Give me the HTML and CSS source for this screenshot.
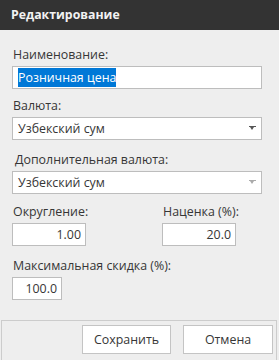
FILE: index.html
```html
<!DOCTYPE html>
<html lang="ru">
<head>
<meta charset="utf-8">
<link rel="stylesheet" href="styles.css">
</head>
<body>
<div class="dialog">
  <div class="titlebar">Редактирование</div>
  <div class="form">
    <div class="field f1">
      <div class="label">Наименование:</div>
      <div class="input wide"><span class="sel">Розничная цена</span></div>
    </div>
    <div class="field f2">
      <div class="label">Валюта:</div>
      <div class="input wide select"><span>Узбекский сум</span><span class="arrow dark"></span></div>
    </div>
    <div class="field f3">
      <div class="label indent">Дополнительная валюта:</div>
      <div class="input wide select"><span>Узбекский сум</span><span class="arrow light"></span></div>
    </div>
    <div class="row f4">
      <div class="field">
        <div class="label">Округление:</div>
        <div class="input num small">1.00</div>
      </div>
      <div class="field">
        <div class="label">Наценка (%):</div>
        <div class="input num small">20.0</div>
      </div>
    </div>
    <div class="field f5">
      <div class="label">Максимальная скидка (%):</div>
      <div class="input num tiny">100.0</div>
    </div>
  </div>
  <div class="footer">
    <button class="btn save">Сохранить</button>
    <button class="btn cancel">Отмена</button>
  </div>
</div>
</body>
</html>
```
FILE: styles.css
```css
* { box-sizing: border-box; }
html, body { margin: 0; padding: 0; }
body {
  background: #eeeeee;
  font-family: "Open Sans", "Noto Sans", sans-serif;
  font-size: 12.4px;
  color: #363636;
  width: 279px;
  height: 360px;
  overflow: hidden;
}
.dialog { display: flex; flex-direction: column; height: 360px; }
.titlebar {
  height: 30px;
  background: #333333;
  color: #f2f2f2;
  font-weight: bold;
  font-size: 12.3px;
  line-height: 30px;
  padding-left: 11px;
}
.form { flex: 1; padding: 0 17px 0 12px; display: flex; flex-direction: column; }
.field { display: flex; flex-direction: column; }
.label { line-height: 16px; height: 16px; margin-bottom: 3px; padding-left: 1px; white-space: nowrap; }
.label.indent { padding-left: 3px; }
.f1 { margin-top: 17px; }
.f2 { margin-top: 9px; }
.f3 { margin-top: 12px; }
.f4 { margin-top: 10px; }
.f5 { margin-top: 12px; }
.input {
  height: 23px;
  background: #ffffff;
  border: 1px solid #bdbdbd;
  line-height: 21px;
  padding: 0 4px 0 5px;
  white-space: nowrap;
}
.wide { width: 250px; }
.small { width: 74px; }
.tiny { width: 50px; }
.num { text-align: right; }
.sel { background: #0078d7; color: #ffffff; padding: 1px 0; }
.select { display: flex; align-items: center; justify-content: space-between; padding-right: 5px; }
.arrow { width: 7px; height: 5px; position: relative; }
.arrow::before { content: ""; position: absolute; left: 0; top: 0; width: 7px; height: 1px; background: currentColor; }
.arrow::after {
  content: ""; position: absolute; left: 1px; top: 1px;
  border-left: 2.5px solid transparent; border-right: 2.5px solid transparent;
  border-top: 3px solid currentColor;
}
.arrow.dark { color: #555555; }
.arrow.light { color: #aaaaaa; }
.row { display: grid; grid-template-columns: 150px 100px; }
.footer {
  height: 40px;
  margin: 0 2px 0 1px;
  border: 1px solid #cccccc;
  border-bottom: none;
  display: flex;
  justify-content: flex-end;
  align-items: flex-start;
  gap: 12px;
  padding: 4px 3px 0 0;
}
.btn {
  height: 29px;
  width: 89px;
  background: #ffffff;
  border: 1px solid #c4c4c4;
  font-family: inherit;
  font-size: 12.4px;
  color: #363636;
  padding: 0;
}
.btn.cancel { width: 90px; }
```
